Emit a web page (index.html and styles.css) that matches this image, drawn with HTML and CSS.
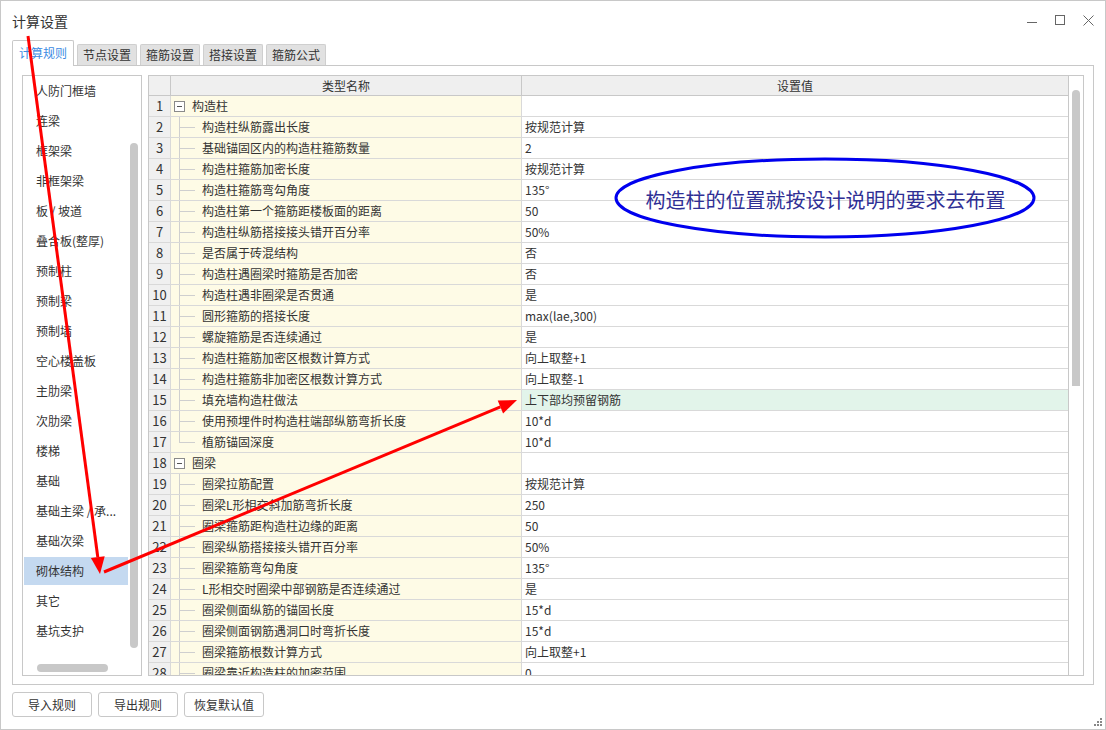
FILE: index.html
```html
<!DOCTYPE html>
<html lang="zh-CN">
<head>
<meta charset="utf-8">
<title>计算设置</title>
<link rel="stylesheet" href="styles.css">
</head>
<body>
<div class="window">
  <div class="titlebar">
    <div class="title">计算设置</div>
    <div class="controls">
      <svg width="11" height="11" viewBox="0 0 11 11"><line x1="0" y1="7.5" x2="10" y2="7.5" stroke="#666" stroke-width="1"/></svg>
      <svg width="11" height="11" viewBox="0 0 11 11"><rect x="0.5" y="0.5" width="9" height="9" fill="none" stroke="#666" stroke-width="1"/></svg>
      <svg width="11" height="11" viewBox="0 0 11 11"><path d="M0.5 0.5 L10.5 10.5 M10.5 0.5 L0.5 10.5" stroke="#666" stroke-width="1"/></svg>
    </div>
  </div>

  <div class="tabs">
    <div class="tab active">计算规则</div>
    <div class="tab">节点设置</div>
    <div class="tab">箍筋设置</div>
    <div class="tab">搭接设置</div>
    <div class="tab">箍筋公式</div>
  </div>

  <div class="panel">
    <div class="list">
      <div class="items">
        <div class="item">人防门框墙</div>
        <div class="item">连梁</div>
        <div class="item">框架梁</div>
        <div class="item">非框架梁</div>
        <div class="item">板 / 坡道</div>
        <div class="item">叠合板(整厚)</div>
        <div class="item">预制柱</div>
        <div class="item">预制梁</div>
        <div class="item">预制墙</div>
        <div class="item">空心楼盖板</div>
        <div class="item">主肋梁</div>
        <div class="item">次肋梁</div>
        <div class="item">楼梯</div>
        <div class="item">基础</div>
        <div class="item">基础主梁 / 承...</div>
        <div class="item">基础次梁</div>
        <div class="item selected">砌体结构</div>
        <div class="item">其它</div>
        <div class="item">基坑支护</div>
      </div>
      <div class="list-vthumb"></div>
      <div class="list-hthumb"></div>
    </div>

    <div class="grid">
      <div class="table">
        <div class="row head"><div class="num"></div><div>类型名称</div><div>设置值</div></div>
        <div class="row"><div class="num">1</div><div class="name group"><span class="toggle"></span>构造柱</div><div class="val"></div></div>
        <div class="row"><div class="num">2</div><div class="name"><span class="guide"></span>构造柱纵筋露出长度</div><div class="val">按规范计算</div></div>
        <div class="row"><div class="num">3</div><div class="name"><span class="guide"></span>基础锚固区内的构造柱箍筋数量</div><div class="val">2</div></div>
        <div class="row"><div class="num">4</div><div class="name"><span class="guide"></span>构造柱箍筋加密长度</div><div class="val">按规范计算</div></div>
        <div class="row"><div class="num">5</div><div class="name"><span class="guide"></span>构造柱箍筋弯勾角度</div><div class="val">135°</div></div>
        <div class="row"><div class="num">6</div><div class="name"><span class="guide"></span>构造柱第一个箍筋距楼板面的距离</div><div class="val">50</div></div>
        <div class="row"><div class="num">7</div><div class="name"><span class="guide"></span>构造柱纵筋搭接接头错开百分率</div><div class="val">50%</div></div>
        <div class="row"><div class="num">8</div><div class="name"><span class="guide"></span>是否属于砖混结构</div><div class="val">否</div></div>
        <div class="row"><div class="num">9</div><div class="name"><span class="guide"></span>构造柱遇圈梁时箍筋是否加密</div><div class="val">否</div></div>
        <div class="row"><div class="num">10</div><div class="name"><span class="guide"></span>构造柱遇非圈梁是否贯通</div><div class="val">是</div></div>
        <div class="row"><div class="num">11</div><div class="name"><span class="guide"></span>圆形箍筋的搭接长度</div><div class="val">max(lae,300)</div></div>
        <div class="row"><div class="num">12</div><div class="name"><span class="guide"></span>螺旋箍筋是否连续通过</div><div class="val">是</div></div>
        <div class="row"><div class="num">13</div><div class="name"><span class="guide"></span>构造柱箍筋加密区根数计算方式</div><div class="val">向上取整+1</div></div>
        <div class="row"><div class="num">14</div><div class="name"><span class="guide"></span>构造柱箍筋非加密区根数计算方式</div><div class="val">向上取整-1</div></div>
        <div class="row"><div class="num">15</div><div class="name"><span class="guide"></span>填充墙构造柱做法</div><div class="val hl">上下部均预留钢筋</div></div>
        <div class="row"><div class="num">16</div><div class="name"><span class="guide"></span>使用预埋件时构造柱端部纵筋弯折长度</div><div class="val">10*d</div></div>
        <div class="row"><div class="num">17</div><div class="name"><span class="guide last"></span>植筋锚固深度</div><div class="val">10*d</div></div>
        <div class="row"><div class="num">18</div><div class="name group"><span class="toggle"></span>圈梁</div><div class="val"></div></div>
        <div class="row"><div class="num">19</div><div class="name"><span class="guide"></span>圈梁拉筋配置</div><div class="val">按规范计算</div></div>
        <div class="row"><div class="num">20</div><div class="name"><span class="guide"></span>圈梁L形相交斜加筋弯折长度</div><div class="val">250</div></div>
        <div class="row"><div class="num">21</div><div class="name"><span class="guide"></span>圈梁箍筋距构造柱边缘的距离</div><div class="val">50</div></div>
        <div class="row"><div class="num">22</div><div class="name"><span class="guide"></span>圈梁纵筋搭接接头错开百分率</div><div class="val">50%</div></div>
        <div class="row"><div class="num">23</div><div class="name"><span class="guide"></span>圈梁箍筋弯勾角度</div><div class="val">135°</div></div>
        <div class="row"><div class="num">24</div><div class="name"><span class="guide"></span>L形相交时圈梁中部钢筋是否连续通过</div><div class="val">是</div></div>
        <div class="row"><div class="num">25</div><div class="name"><span class="guide"></span>圈梁侧面纵筋的锚固长度</div><div class="val">15*d</div></div>
        <div class="row"><div class="num">26</div><div class="name"><span class="guide"></span>圈梁侧面钢筋遇洞口时弯折长度</div><div class="val">15*d</div></div>
        <div class="row"><div class="num">27</div><div class="name"><span class="guide"></span>圈梁箍筋根数计算方式</div><div class="val">向上取整+1</div></div>
        <div class="row"><div class="num">28</div><div class="name"><span class="guide"></span>圈梁靠近构造柱的加密范围</div><div class="val">0</div></div>
      </div>
      <div class="vscroll"><div class="vthumb"></div></div>
    </div>
  </div>

  <div class="actions">
    <button class="btn">导入规则</button>
    <button class="btn">导出规则</button>
    <button class="btn">恢复默认值</button>
  </div>

  <svg class="grip" width="8" height="8" viewBox="0 0 8 8">
    <rect x="6" y="0" width="2" height="2" fill="#888"/>
    <rect x="3" y="3" width="2" height="2" fill="#888"/>
    <rect x="6" y="3" width="2" height="2" fill="#888"/>
    <rect x="0" y="6" width="2" height="2" fill="#888"/>
    <rect x="3" y="6" width="2" height="2" fill="#888"/>
    <rect x="6" y="6" width="2" height="2" fill="#888"/>
  </svg>

  <svg class="overlay" width="1106" height="730" viewBox="0 0 1106 730">
    <ellipse cx="825" cy="198" rx="209" ry="39" fill="none" stroke="#0000ee" stroke-width="3"/>
    <line x1="28" y1="36" x2="97.8" y2="557.2" stroke="#ff0000" stroke-width="3"/>
    <polygon points="100,574 104.7,556.2 90.9,558.1" fill="#ff0000"/>
    <line x1="104" y1="572" x2="500.4" y2="406.9" stroke="#ff0000" stroke-width="3"/>
    <polygon points="517,400 503.1,413.4 497.7,400.4" fill="#ff0000"/>
  </svg>
  <div class="note">构造柱的位置就按设计说明的要求去布置</div>
</div>
</body>
</html>
```

FILE: styles.css
```css
* {
  box-sizing: border-box;
}

body {
  margin: 0;
  font-family: "Noto Sans CJK SC", "Microsoft YaHei", "Noto Sans", sans-serif;
  font-size: 12px;
  color: #333;
  background: #fff;
}

.window {
  position: relative;
  width: 1106px;
  height: 730px;
  border: 1px solid #c8c8c8;
  background: #fff;
  padding: 0 11px;
}

.titlebar {
  height: 39px;
  display: flex;
  align-items: center;
  justify-content: space-between;
}

.title {
  font-size: 14px;
  color: #333;
  line-height: 20px;
}

.controls {
  display: flex;
  gap: 17px;
  align-items: center;
}

.controls svg {
  display: block;
}

.tabs {
  display: flex;
  gap: 3px;
  align-items: flex-end;
  height: 25px;
}

.tab {
  height: 21px;
  padding: 0 5px;
  line-height: 20px;
  border: 1px solid #cfcfcf;
  border-bottom: none;
  background: #e1e1e1;
  border-radius: 2px 2px 0 0;
  color: #333;
  white-space: nowrap;
}

.tab.active {
  height: 26px;
  margin-bottom: -1px;
  padding: 0 6px;
  line-height: 24px;
  background: #fff;
  color: #3b8be3;
  border-color: #c8c8c8;
  position: relative;
  z-index: 1;
}

.panel {
  height: 620px;
  border: 1px solid #c8c8c8;
  padding: 9px;
  display: flex;
  gap: 6px;
}

.list {
  position: relative;
  width: 120px;
  height: 601px;
  border: 1px solid #c8c8c8;
  overflow: hidden;
}

.items {
  display: flex;
  flex-direction: column;
}

.item {
  height: 28px;
  width: 104px;
  margin: 1px 0 1px 1px;
  padding-left: 12px;
  line-height: 28px;
  white-space: nowrap;
  overflow: hidden;
  color: #333;
}

.item.selected {
  background: #c4d9f0;
}

.list-vthumb {
  position: absolute;
  left: 107px;
  top: 67px;
  width: 8px;
  height: 505px;
  border-radius: 4px;
  background: #c8c8c8;
}

.list-hthumb {
  position: absolute;
  left: 14px;
  top: 588px;
  width: 71px;
  height: 8px;
  border-radius: 4px;
  background: #c8c8c8;
}

.grid {
  width: 936px;
  height: 601px;
  border: 1px solid #c8c8c8;
  display: flex;
}

.table {
  flex: 1;
  overflow: hidden;
}

.vscroll {
  width: 15px;
  border-left: 1px solid #c8c8c8;
  position: relative;
}

.vthumb {
  position: absolute;
  left: 3px;
  top: 14px;
  width: 8px;
  height: 296px;
  border-radius: 4px 4px 0 0;
  background: #c8c8c8;
}

.row {
  display: grid;
  grid-template-columns: 22px 351px 1fr;
  height: 21px;
}

.row > div {
  border-right: 1px solid #d9d9d9;
  border-bottom: 1px solid #d9d9d9;
  line-height: 20px;
  white-space: nowrap;
  overflow: hidden;
}

.row > div:last-child {
  border-right: none;
}

.row.head {
  height: 20px;
  background: #efefef;
}

.row.head > div {
  text-align: center;
  line-height: 19px;
  border-color: #c8c8c8;
}

.row.head > div.num {
  border-color: #c8c8c8;
}

.num {
  background: #f0f0f0;
  text-align: center;
  font-size: 13px;
}

.name {
  background: #fefbe6;
  display: flex;
  align-items: stretch;
  padding-left: 8px;
}

.name.group {
  padding-left: 3px;
  align-items: center;
}

.guide {
  flex: none;
  width: 16px;
  margin-right: 7px;
  background:
    linear-gradient(#cfcfcf, #cfcfcf) 0 0 / 1px 100% no-repeat,
    linear-gradient(#cfcfcf, #cfcfcf) 0 10px / 100% 1px no-repeat;
}

.guide.last {
  background:
    linear-gradient(#cfcfcf, #cfcfcf) 0 0 / 1px 11px no-repeat,
    linear-gradient(#cfcfcf, #cfcfcf) 0 10px / 100% 1px no-repeat;
}

.toggle {
  flex: none;
  width: 11px;
  height: 11px;
  border: 1px solid #8a8a8a;
  background: #fff;
  margin-right: 7px;
  display: flex;
  align-items: center;
  justify-content: center;
}

.toggle::after {
  content: "";
  width: 5px;
  height: 1px;
  background: #555;
}

.val {
  padding-left: 3px;
  background: #fff;
}

.val.hl {
  background: #e2f4ea;
}

.actions {
  display: flex;
  gap: 6px;
  margin-top: 7px;
}

.btn {
  width: 80px;
  height: 25px;
  border: 1px solid #c8c8c8;
  border-radius: 3px;
  background: #fff;
  font: inherit;
  color: #333;
  padding: 0;
}

.grip {
  position: absolute;
  right: 3px;
  bottom: 3px;
}

.overlay {
  position: absolute;
  left: -1px;
  top: -1px;
  pointer-events: none;
  z-index: 5;
}

.note {
  position: absolute;
  left: 614px;
  top: 158px;
  width: 421px;
  height: 80px;
  display: flex;
  align-items: center;
  justify-content: center;
  font-size: 20px;
  color: #2f2f95;
  z-index: 6;
  pointer-events: none;
}
```
